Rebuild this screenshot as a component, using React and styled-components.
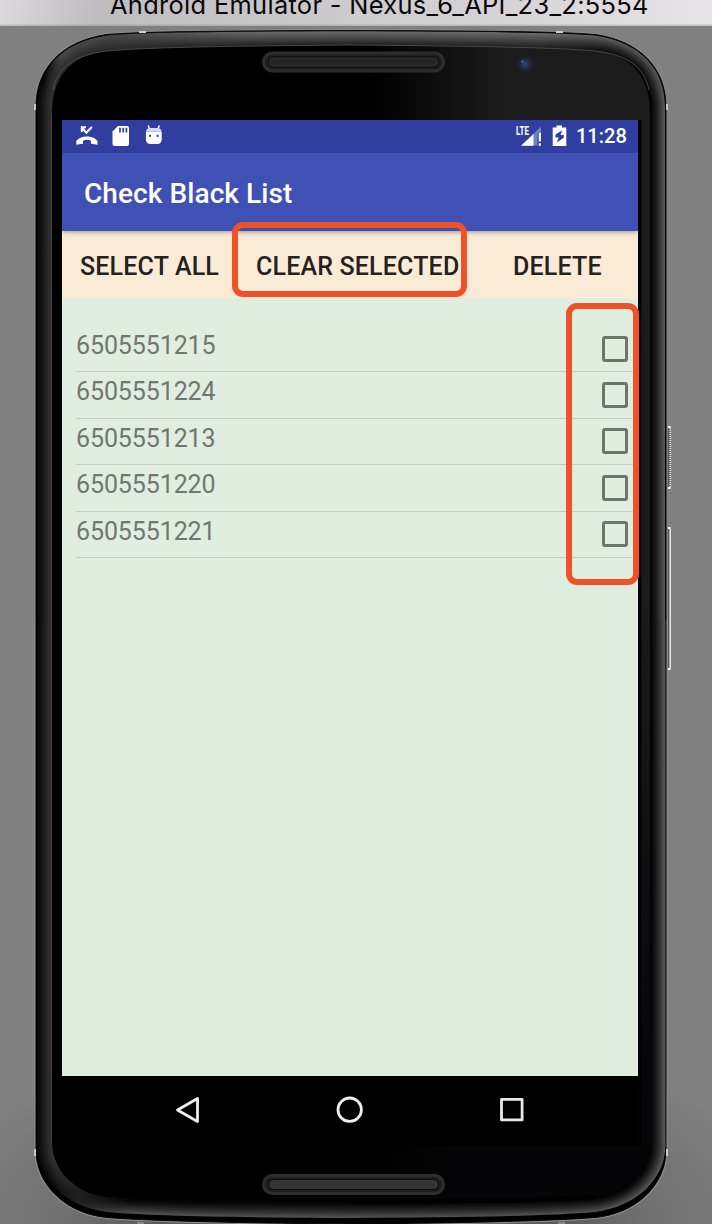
import React from 'react';
import styled, { createGlobalStyle } from 'styled-components';

const GlobalStyle = createGlobalStyle`
  * { box-sizing: border-box; }
  body { margin: 0; background: #808080; overflow: hidden; }
`;

const Desktop = styled.main`
  position: relative;
  width: 712px;
  height: 1224px;
  overflow: hidden;
  background: radial-gradient(ellipse 340px 160px at 50% 100%, #5c5c5c 60%, #707070 85%, #808080 125%);
  font-family: Roboto, "Noto Sans", sans-serif;
`;

const WindowTitle = styled.header`
  position: relative;
  height: 26px;
  overflow: hidden;
  background:
    linear-gradient(rgba(255, 255, 255, 0) 90%, rgba(120, 118, 120, 0.35)),
    linear-gradient(100deg, #dcdadd 0, #bfbcc0 14%, #c9c7ca 40%, #d6d3d7 70%, #e8e5e9 100%);
  color: #080808;
  font-family: Inter, sans-serif;
  font-size: 25.4px;
  line-height: 30px;
  white-space: nowrap;
  padding-left: 110px;

  span {
    display: block;
    margin-top: -10px;
    letter-spacing: 0.33px;
  }
`;

const DeviceArt = styled.svg`
  position: absolute;
  inset: 0;
`;

const Screen = styled.section`
  position: relative;
  width: 576px;
  margin: 94px 0 0 62px;
  display: flex;
  flex-direction: column;
`;

const StatusBar = styled.div`
  height: 33px;
  padding: 0 12px 2px 14px;
  display: flex;
  align-items: center;
  background: #303f9f;
  color: #fff;
`;

const StatusIcon = styled.svg`
  display: block;
  flex: none;
  overflow: visible;
  margin-left: ${(p) => p.$gap || 0}px;
`;

const Clock = styled.time`
  margin-left: 9px;
  padding-top: 2px;
  width: 50px;
  font-size: 20px;
  font-weight: 500;
  line-height: 31px;
  white-space: nowrap;
`;

const Spacer = styled.div`
  flex: 1;
`;

const AppBar = styled.div`
  position: relative;
  z-index: 1;
  height: 78px;
  padding: 2px 22px 0;
  display: flex;
  align-items: center;
  background: #3f51b5;
  box-shadow: 0 1px 5px rgba(0, 0, 0, 0.38);
  clip-path: inset(0 0 -8px 0);
`;

const AppTitle = styled.h1`
  margin: 0;
  color: #fff;
  font-size: 28px;
  font-weight: 500;
  letter-spacing: 0.08px;
  white-space: nowrap;
`;

const Actions = styled.div`
  height: 67px;
  display: grid;
  grid-template-columns: 176px 257px 143px;
  background: #faebd7;
`;

const ActionButton = styled.button`
  border: 0;
  padding: 3px 0 0 18px;
  background: none;
  color: #24211e;
  font: 500 25px Roboto, sans-serif;
  letter-spacing: 0.17px;
  text-align: left;
  white-space: nowrap;
`;

const Content = styled.div`
  height: 778px;
  padding: 28px 0 0 14px;
  background: #e0eee0;
`;

const NumberRow = styled.label`
  height: 46.4px;
  padding-right: 10px;
  display: flex;
  justify-content: space-between;
  align-items: flex-start;
  border-bottom: 1.5px solid #c3cfc3;
`;

const PhoneNumber = styled.span`
  color: #707770;
  font-size: 25px;
  line-height: 39px;
  letter-spacing: -0.1px;
`;

const CheckBox = styled.input`
  appearance: none;
  width: 26px;
  height: 26px;
  margin: 9.5px 0 0;
  border: 3px solid #6d756d;
  border-radius: 3px;
`;

const NavBar = styled.nav`
  height: 70px;
  padding: 0 113px 2px;
  display: flex;
  align-items: center;
  justify-content: space-between;
  background: #000;
`;

const Highlight = styled.div`
  position: absolute;
  left: ${(p) => p.$x}px;
  top: ${(p) => p.$y}px;
  width: ${(p) => p.$w}px;
  height: ${(p) => p.$h}px;
  z-index: 2;
  border: 6px solid #f05228;
  border-radius: 11px;
  pointer-events: none;
`;

// Each outline holds the left half of an edge; the right half mirrors it about x = 351.
const topOuter = [36, 107, 36, 68, 62, 41, 107, 34.5, 150, 31, 240, 31, 351, 30.5];
const topInner = [52, 113, 52, 80, 68, 55, 107, 51, 150, 47, 240, 46, 351, 45];
const bottomOuter = [36, 1152, 37, 1186, 67, 1214, 107, 1217.5, 150, 1221, 240, 1223, 351, 1224];
const bottomRim = [36.6, 1146, 37, 1180, 67, 1207, 107, 1212, 150, 1216, 240, 1217.5, 351, 1218];
const bottomInner = [52, 1142, 52, 1168, 72, 1193, 107, 1197, 150, 1200, 240, 1201, 351, 1201];

const mix = (a, b, t) => a.map((v, i) => v + (b[i] - v) * t);

const halfShape = (p) => {
  const m = p.map((v, i) => (i % 2 ? v : 702 - v));
  return `M${p[0]} 620V${p[1]}C${p.slice(2, 8).join(' ')}C${p.slice(8).join(' ')}` +
    `C${m[10]} ${m[11]} ${m[8]} ${m[9]} ${m[6]} ${m[7]}C${m[4]} ${m[5]} ${m[2]} ${m[3]} ${m[0]} ${m[1]}V620`;
};

const grey = (v) => `rgb(${v},${v},${v})`;
const STEPS = 15;
const shades = Array.from({ length: STEPS }, (_, i) => {
  const t = i / (STEPS - 1);
  return {
    t,
    left: Math.round(6 + 50 * t),
    corner: Math.round(72 - 34 * t),
    top: Math.round(104 - 76 * t),
    right: Math.round(88 * Math.pow(1 - t, 1.4)),
    bottom: Math.round(80 * Math.pow(1 - t, 1.5)),
  };
});

function Grille({ y, core }) {
  return (
    <g>
      <rect x="262" y={y} width="183" height="21" rx="10.5" fill="#2e2e2e" />
      <rect x="265" y={y + 3} width="177" height="15" rx="7.5" fill="#1e1e1e" />
      <rect x="268" y={y + 5} width="171" height="11" rx="5.5" fill="#0c0c0c" />
      <rect x="269.5" y={y + 6.5} width="168" height="8" rx="4" fill={core} stroke="#373637" />
    </g>
  );
}

function Device() {
  return (
    <DeviceArt width="712" height="1224" viewBox="0 0 712 1224" aria-hidden="true">
      <defs>
        {shades.map((s, i) => (
          <React.Fragment key={i}>
            <linearGradient id={`t${i}`} gradientUnits="userSpaceOnUse" x1="36" x2="666" y1="0" y2="0">
              <stop offset="0.015" stopColor={grey(s.left)} />
              <stop offset="0.04" stopColor={grey(s.corner)} />
              <stop offset="0.13" stopColor={grey(s.corner)} />
              <stop offset="0.35" stopColor={grey(s.top)} />
              <stop offset="0.8" stopColor={grey(s.top)} />
              <stop offset="0.96" stopColor={grey(s.right)} />
            </linearGradient>
            <linearGradient id={`b${i}`} gradientUnits="userSpaceOnUse" x1="36" x2="666" y1="0" y2="0">
              <stop offset="0.02" stopColor={grey(s.left)} />
              <stop offset="0.15" stopColor={grey(s.bottom)} />
              <stop offset="0.85" stopColor={grey(s.bottom)} />
              <stop offset="0.98" stopColor={grey(s.right)} />
            </linearGradient>
          </React.Fragment>
        ))}
        <linearGradient id="glass" gradientUnits="userSpaceOnUse" x1="370" x2="500" y1="0" y2="0">
          <stop offset="0" stopColor="#000" />
          <stop offset="1" stopColor="#1b1b1c" />
        </linearGradient>
        <linearGradient id="chin" gradientUnits="userSpaceOnUse" x1="360" x2="480" y1="0" y2="0">
          <stop offset="0" stopColor="#000" />
          <stop offset="1" stopColor="#050507" />
        </linearGradient>
        <linearGradient id="sideGlass" gradientUnits="userSpaceOnUse" x1="0" x2="0" y1="600" y2="1100">
          <stop offset="0" stopColor="#1b1b1c" />
          <stop offset="1" stopColor="#050507" />
        </linearGradient>
        <radialGradient id="lens">
          <stop offset="0" stopColor="#344779" />
          <stop offset="0.45" stopColor="#232b43" />
          <stop offset="0.65" stopColor="#202228" />
          <stop offset="1" stopColor="#1b1b1c" />
        </radialGradient>
      </defs>

      <g fill="none" strokeWidth="3">
        <path d={halfShape(bottomOuter)} stroke="#939393" />
        <path d={halfShape(topOuter)} stroke="#8b8b8b" />
      </g>
      <path d={halfShape(topOuter)} fill="#000" stroke="#050505" />
      <path d={halfShape(bottomOuter)} fill="#000" stroke="#050505" />
      {shades.map((s, i) => (
        <g key={i}>
          <path d={halfShape(mix(mix(topOuter, topInner, 0.06), topInner, s.t))} fill={`url(#t${i})`} />
          <path d={halfShape(mix(bottomRim, bottomInner, s.t))} fill={`url(#b${i})`} />
        </g>
      ))}
      <path d={halfShape(topInner)} fill="url(#glass)" />
      <path d="M53 90C58 66 75 55 107 51C150 47 240 46 351 45C462 46 552 47 595 51C627 55 644 66 649 90" fill="none" stroke="#555" strokeWidth="0.8" />
      <path d={halfShape(bottomInner)} fill="url(#chin)" />
      <path d="M51.5 114V1142" stroke="#404040" />
      <rect x="638" y="600" width="12" height="546" fill="url(#sideGlass)" />
      <path d="M351 1201C462 1201 552 1200 595 1197" fill="none" stroke="#000" strokeWidth="5" />
      <rect x="638" y="120" width="3.5" height="1026" fill="#020202" />

      <Grille y={51.5} core="#272425" />
      <Grille y={1174} core="#353535" />
      <circle cx="525" cy="64" r="10" fill="url(#lens)" />
      <circle cx="522.5" cy="61.5" r="1" fill="#5770a8" />
      <path d="M139 32h7M556 32h7M35 104v6M667 104v6M35 1149v7M667 1149v7" stroke="#d0d0d0" strokeWidth="1.8" />
      <path d="M137 1223h7M558 1223h7" stroke="#888" strokeWidth="2" />

      <path d="M668.8 427V489" stroke="#555" strokeWidth="1.5" />
      <path d="M670.3 428V487" stroke="#e5e5e5" strokeWidth="1.6" strokeDasharray="1 1" />
      <path d="M668.8 528V669" stroke="#555" strokeWidth="1.5" />
      <path d="M670.2 529V668" stroke="#f2f2f2" strokeWidth="1.4" />
      <path d="M668 427h2.5M668 488h2.5M668 528h2.5M668 669h2.5" stroke="#fff" strokeWidth="2" />
    </DeviceArt>
  );
}

function StatusIcons() {
  return (
    <>
      <StatusIcon width="22" height="22" viewBox="0 0 22 22" fill="none" stroke="#fff">
        <path d="M5.8 7V2.3H10M6 2.5L10.3 7.8L15.9 2" strokeWidth="2" />
        <path d="M.3 19.8V16.3C3.8 10 18 10 21.5 16.3V19.8L14.9 18.8V15.7Q11 13.9 7 15.7V18.8Z" fill="#fff" stroke="none" />
      </StatusIcon>
      <StatusIcon $gap={14} width="18" height="22" viewBox="0 0 18 22">
        <path d="M6 1H15Q17 1 17 3V19Q17 21 15 21H2.5Q.5 21 .5 19V6.5Z" fill="#fff" />
        <path d="M8 2.8V7.6M11.2 2.8V7.6M14.4 2.8V7.6" stroke="#303f9f" strokeWidth="1.7" />
      </StatusIcon>
      <StatusIcon $gap={15} width="18" height="22" viewBox="0 0 18 22">
        <path d="M3.2 .5L4.5 4M14.3 .5L13 4" stroke="#fff" strokeWidth="1.5" />
        <path d="M1 6.7Q1.4 3 5 3H12.5Q16 3 16.5 6.7Z" fill="#d8dcf5" />
        <path d="M.9 6.7H16.7V14.2Q16.7 19 12 19H5.5Q.9 19 .9 14.2Z" fill="#fff" />
        <rect x="4" y="9.8" width="2" height="2" fill="#303f9f" />
        <rect x="11.6" y="9.8" width="2" height="2" fill="#303f9f" />
      </StatusIcon>
    </>
  );
}

const numbers = ['6505551215', '6505551224', '6505551213', '6505551220', '6505551221'];

export default function App() {
  return (
    <Desktop>
      <GlobalStyle />
      <Device />
      <WindowTitle>
        <span>Android Emulator - Nexus_6_API_23_2:5554</span>
      </WindowTitle>
      <Screen>
        <StatusBar>
          <StatusIcons />
          <Spacer />
          <StatusIcon width="26" height="22" viewBox="0 0 26 22">
            <path d="M25 1.5V8H21.5V20.5H5.5Z" fill="#7480c2" />
            <path d="M17.5 9V20.8H5Z" fill="#fff" />
            <text x="0" y="10" fill="#fff" fontFamily="Roboto" fontWeight="700" fontSize="12.5" textLength="13" lengthAdjust="spacingAndGlyphs">LTE</text>
            <path d="M23.8 8V16.5M23.8 18.2V20.8" stroke="#fff" strokeWidth="2.2" />
          </StatusIcon>
          <StatusIcon $gap={10} width="15" height="22" viewBox="0 0 15 22">
            <path d="M4.5 .5H10V2.5H14.3V21H.7V2.5H4.5Z" fill="#fff" />
            <path d="M10.3 5.2L3.5 9.5V12.5H6.8L4.8 17.5L11.8 12.7V10H8.5Z" fill="#303f9f" />
          </StatusIcon>
          <Clock>11:28</Clock>
        </StatusBar>
        <AppBar>
          <AppTitle>Check Black List</AppTitle>
        </AppBar>
        <Actions>
          <ActionButton>SELECT ALL</ActionButton>
          <ActionButton>CLEAR SELECTED</ActionButton>
          <ActionButton>DELETE</ActionButton>
        </Actions>
        <Content>
          {numbers.map((number) => (
            <NumberRow key={number}>
              <PhoneNumber>{number}</PhoneNumber>
              <CheckBox type="checkbox" />
            </NumberRow>
          ))}
        </Content>
        <NavBar>
          <svg width="26" height="28" viewBox="0 0 26 28">
            <path d="M22.5 2.5V25.5L2.5 14Z" fill="none" stroke="#eee" strokeWidth="2.8" strokeLinejoin="round" />
          </svg>
          <svg width="28" height="28" viewBox="0 0 28 28">
            <circle cx="13.7" cy="13.7" r="11.7" fill="none" stroke="#eee" strokeWidth="2.8" />
          </svg>
          <svg width="26" height="28" viewBox="0 0 26 28">
            <rect x="2.5" y="3.3" width="20.6" height="20.6" fill="none" stroke="#e8e8e8" strokeWidth="2.8" strokeLinejoin="round" />
          </svg>
        </NavBar>
      </Screen>
      <Highlight $x={232} $y={222} $w={235} $h={75} />
      <Highlight $x={566} $y={303} $w={73} $h={282} />
    </Desktop>
  );
}
